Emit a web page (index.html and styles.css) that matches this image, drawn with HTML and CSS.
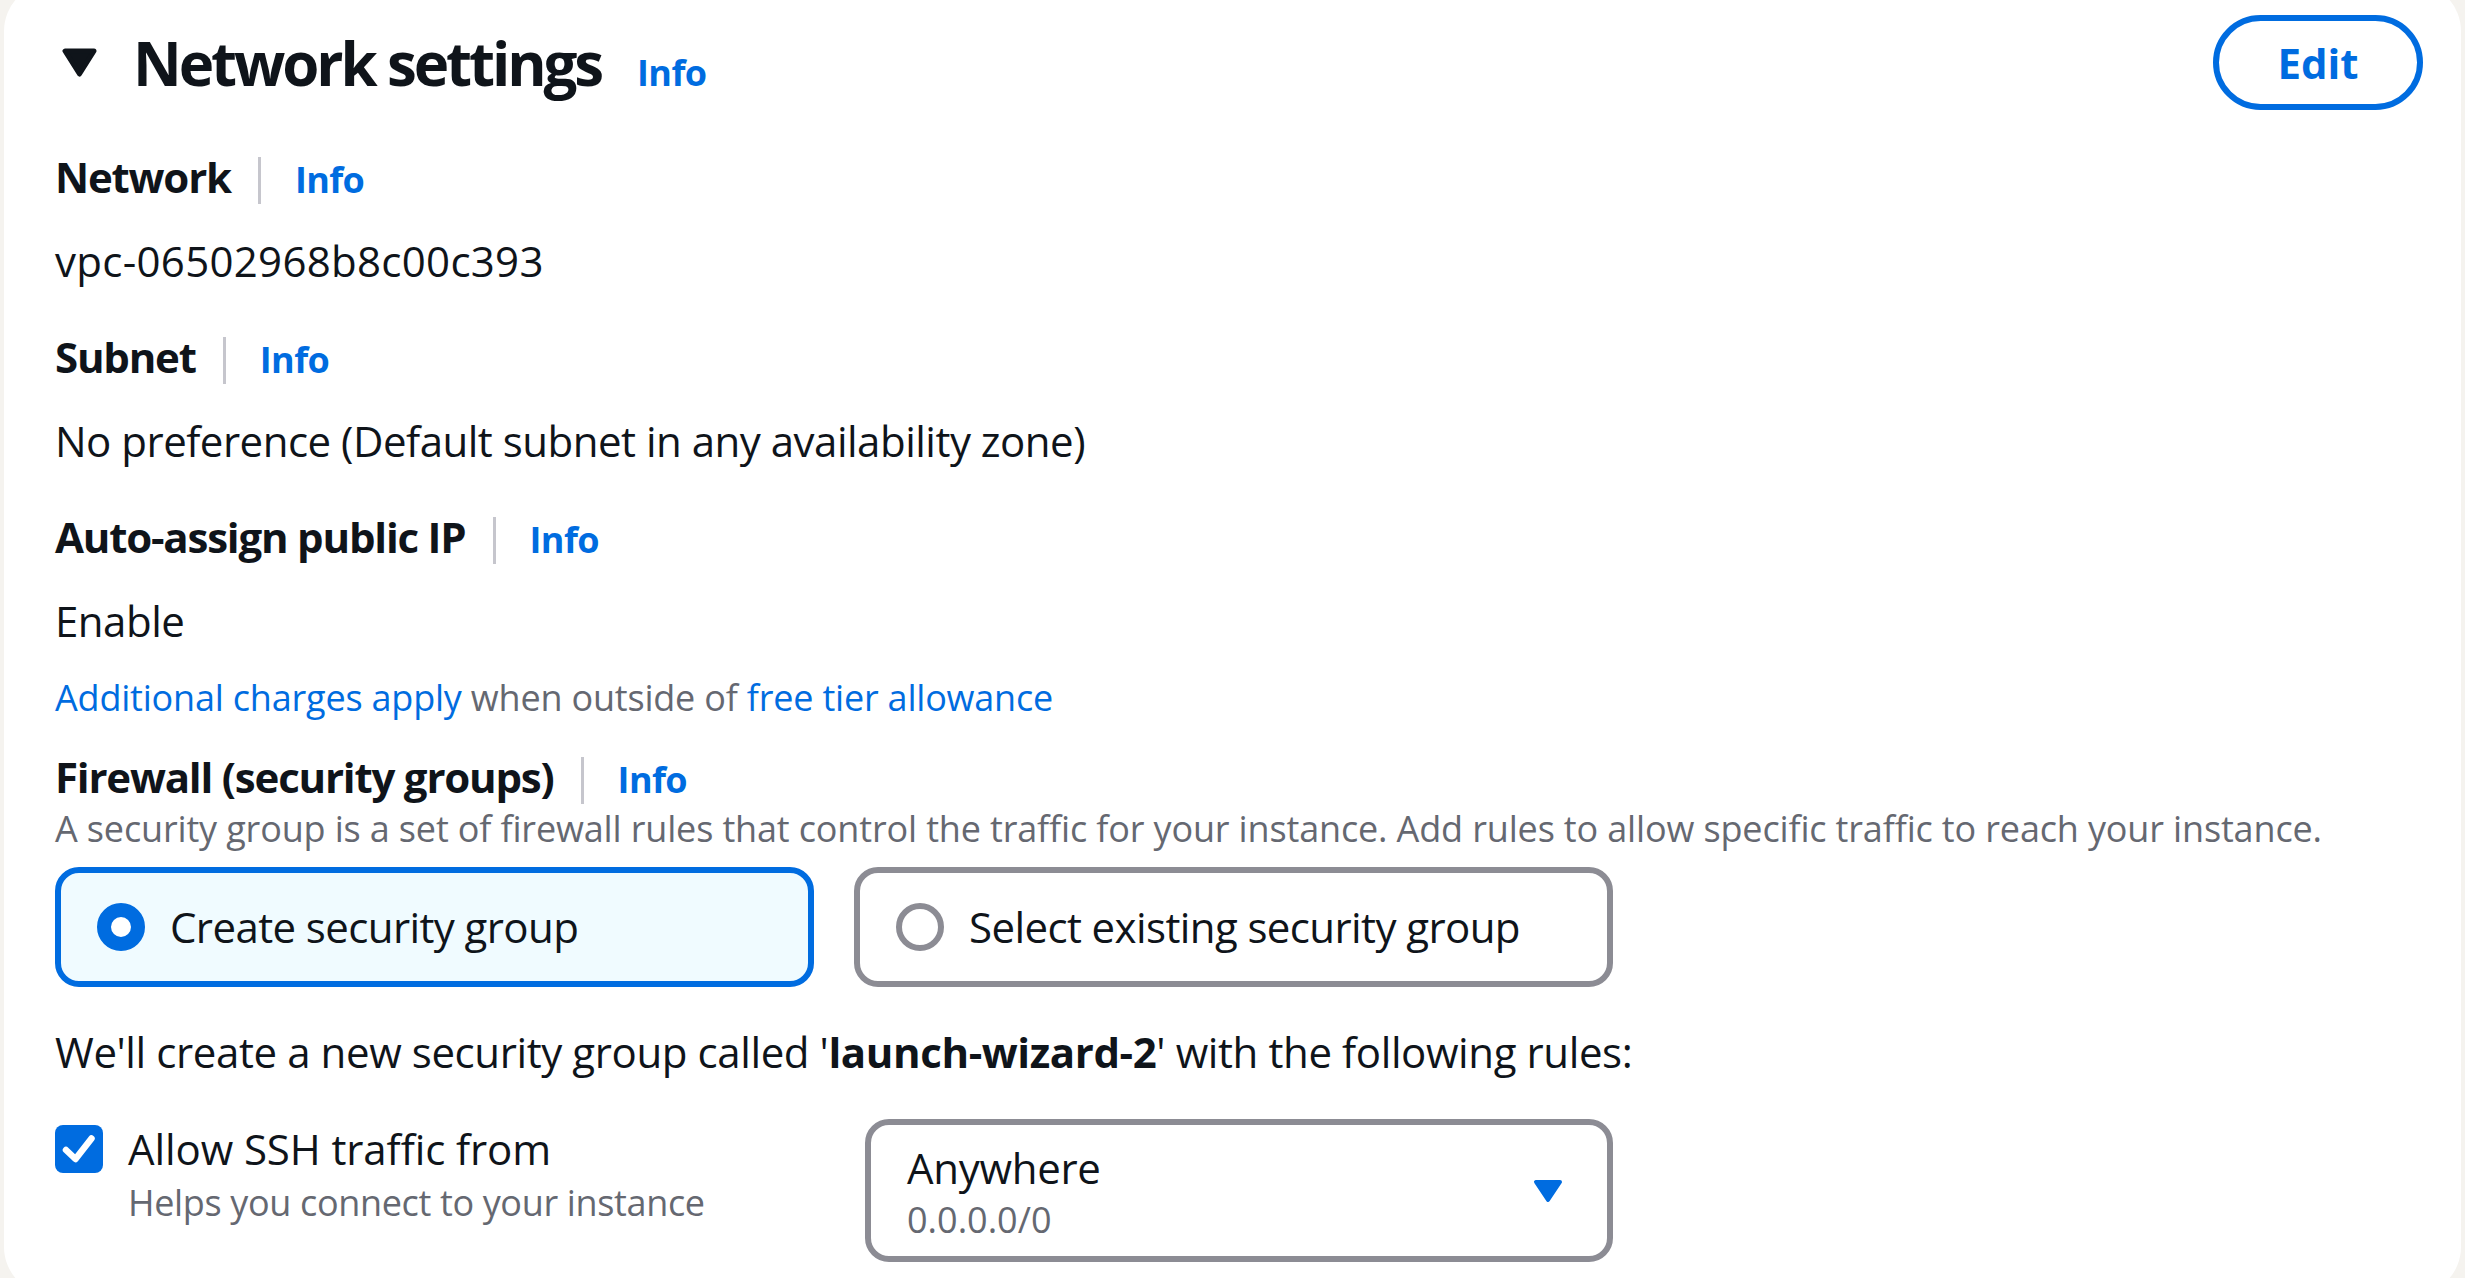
FILE: index.html
```html
<!DOCTYPE html>
<html lang="en">
<head>
<meta charset="utf-8">
<title>Network settings</title>
<link rel="stylesheet" href="styles.css">
</head>
<body>
<div class="card">
  <div class="header">
    <div class="title">
      <svg class="expand-caret" viewBox="0 0 35 29" width="35" height="29"><path d="M3 3 H32 L17.5 26 Z" fill="#0f141a" stroke="#0f141a" stroke-width="5" stroke-linejoin="round"/></svg>
      <h2 class="heading">Network settings</h2>
      <a class="info info-heading">Info</a>
    </div>
    <button class="btn-edit">Edit</button>
  </div>

  <div class="field">
    <div class="label-row"><span class="label">Network</span><span class="divider"></span><a class="info">Info</a></div>
    <div class="value value-id">vpc-06502968b8c00c393</div>
  </div>

  <div class="field">
    <div class="label-row"><span class="label">Subnet</span><span class="divider"></span><a class="info">Info</a></div>
    <div class="value">No preference (Default subnet in any availability zone)</div>
  </div>

  <div class="field field-last">
    <div class="label-row"><span class="label">Auto-assign public IP</span><span class="divider"></span><a class="info">Info</a></div>
    <div class="value">Enable</div>
    <div class="note"><a class="link">Additional charges apply</a> when outside of <a class="link">free tier allowance</a></div>
  </div>

  <div class="firewall">
    <div class="label-row"><span class="label">Firewall (security groups)</span><span class="divider"></span><a class="info">Info</a></div>
    <div class="description">A security group is a set of firewall rules that control the traffic for your instance. Add rules to allow specific traffic to reach your instance.</div>
    <div class="tiles">
      <div class="tile tile-selected"><span class="radio radio-on"></span><span class="tile-text">Create security group</span></div>
      <div class="tile"><span class="radio"></span><span class="tile-text">Select existing security group</span></div>
    </div>
    <div class="create-note">We'll create a new security group called '<b>launch-wizard-2</b>' with the following rules:</div>
    <div class="rule-row">
      <div class="check-wrap">
        <span class="checkbox"><svg viewBox="0 0 48 48" width="48" height="48"><polyline points="11,25 20.5,34 36.5,13.5" fill="none" stroke="#ffffff" stroke-width="6.5" stroke-linecap="round" stroke-linejoin="round"/></svg></span>
        <div class="check-text">
          <div class="check-label">Allow SSH traffic from</div>
          <div class="check-desc">Helps you connect to your instance</div>
        </div>
      </div>
      <div class="select">
        <div class="select-text">
          <div class="select-value">Anywhere</div>
          <div class="select-sub">0.0.0.0/0</div>
        </div>
        <svg class="select-caret" viewBox="0 0 30 24" width="30" height="24"><path d="M3 3 H27 L15 21 Z" fill="#006ce0" stroke="#006ce0" stroke-width="4" stroke-linejoin="round"/></svg>
      </div>
    </div>
  </div>
</div>
</body>
</html>
```

FILE: styles.css
```css
html, body {
  margin: 0;
  padding: 0;
}
body {
  background: #f5f3ef;
  overflow: hidden;
  font-family: "Open Sans", "Noto Sans", Arial, sans-serif;
  color: #0f141a;
  height: 1278px;
}
.card {
  box-sizing: border-box;
  margin: -17px 0 0 4px;
  width: 2457px;
  height: 1312px;
  background: #ffffff;
  border-radius: 48px;
  padding: 32px 38px 0 51px;
}
.header {
  display: flex;
  justify-content: space-between;
  align-items: center;
  height: 95px;
  margin-bottom: 37px;
}
.title {
  display: flex;
  align-items: baseline;
}
.expand-caret {
  align-self: center;
  margin-left: 7px;
  margin-right: 36px;
}
.heading {
  margin: 0;
  font-size: 60px;
  line-height: 72px;
  font-weight: 700;
  letter-spacing: -3.1px;
  color: #0f141a;
}
.info {
  font-size: 36px;
  line-height: 48px;
  font-weight: 700;
  letter-spacing: -0.6px;
  color: #006ce0;
  text-decoration: none;
}
.info-heading {
  margin-left: 36px;
}
.btn-edit {
  box-sizing: border-box;
  height: 95px;
  width: 210px;
  border: 6px solid #006ce0;
  border-radius: 48px;
  background: #ffffff;
  color: #006ce0;
  font-family: inherit;
  font-size: 42px;
  font-weight: 700;
  padding: 0;
}
.label-row {
  display: flex;
  align-items: baseline;
  height: 60px;
}
.label {
  font-size: 42px;
  line-height: 60px;
  font-weight: 700;
  letter-spacing: -1.2px;
}
.divider {
  align-self: center;
  width: 3px;
  height: 47px;
  margin-top: 6px;
  background: #c6c6cd;
  margin-left: 27px;
  margin-right: 34px;
}
.value {
  font-size: 42px;
  line-height: 60px;
  letter-spacing: -0.5px;
  margin-top: 24px;
}
.value-id {
  letter-spacing: 0.3px;
}
.field {
  margin-bottom: 36px;
}
.field-last {
  margin-bottom: 0;
}
.note {
  margin-top: 23px;
  font-size: 36px;
  line-height: 48px;
  letter-spacing: -0.2px;
  color: #656871;
}
.link {
  color: #006ce0;
  text-decoration: none;
}
.firewall {
  margin-top: 25px;
}
.description {
  margin-top: -2px;
  font-size: 36px;
  line-height: 48px;
  letter-spacing: -0.15px;
  color: #656871;
}
.tiles {
  display: grid;
  grid-template-columns: 759px 759px;
  column-gap: 40px;
  margin-top: 14px;
}
.tile {
  box-sizing: border-box;
  height: 120px;
  border: 6px solid #8c8c94;
  border-radius: 24px;
  display: flex;
  align-items: center;
  padding-left: 36px;
}
.tile-selected {
  border-color: #006ce0;
  background: #f0fbff;
}
.radio {
  box-sizing: border-box;
  width: 48px;
  height: 48px;
  border-radius: 50%;
  border: 6px solid #8c8c94;
  background: #ffffff;
  flex: none;
}
.radio-on {
  border: 14px solid #006ce0;
}
.tile-text {
  margin-left: 25px;
  font-size: 42px;
  line-height: 60px;
  letter-spacing: -0.6px;
}
.create-note {
  margin-top: 35px;
  font-size: 42px;
  line-height: 60px;
  letter-spacing: -0.4px;
}
.create-note b {
  font-weight: 700;
}
.rule-row {
  display: grid;
  grid-template-columns: 810px 748px;
  margin-top: 37px;
}
.check-wrap {
  display: flex;
  align-items: flex-start;
}
.checkbox {
  width: 48px;
  height: 48px;
  border-radius: 8px;
  background: #006ce0;
  margin-top: 6px;
  flex: none;
  display: flex;
}
.check-text {
  margin-left: 25px;
}
.check-label {
  font-size: 42px;
  line-height: 60px;
  letter-spacing: -0.1px;
}
.check-desc {
  font-size: 36px;
  line-height: 48px;
  letter-spacing: -0.35px;
  color: #656871;
}
.select {
  box-sizing: border-box;
  height: 143px;
  border: 6px solid #8c8c94;
  border-radius: 24px;
  display: flex;
  align-items: center;
  justify-content: space-between;
  padding: 0 44px 0 36px;
}
.select-text {
  display: flex;
  flex-direction: column;
}
.select-value {
  font-size: 42px;
  line-height: 60px;
  letter-spacing: -0.3px;
}
.select-sub {
  font-size: 36px;
  line-height: 48px;
  color: #656871;
  margin-top: -2px;
}
```
